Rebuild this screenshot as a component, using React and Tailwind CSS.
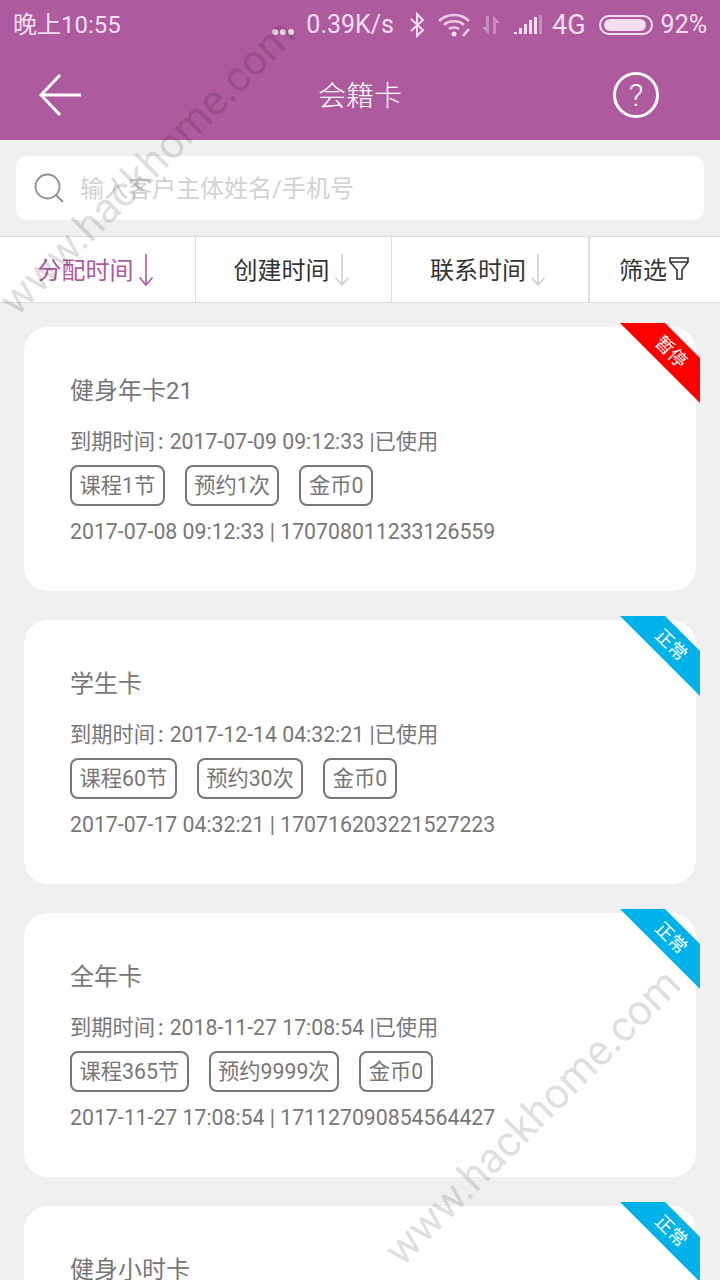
import { Search } from 'lucide-react';

const cards = [
  { name: '健身年卡21', expire: '2017-07-09 09:12:33', tags: ['课程1节', '预约1次', '金币0'], order: '2017-07-08 09:12:33 | 170708011233126559', status: '暂停', paused: true },
  { name: '学生卡', expire: '2017-12-14 04:32:21', tags: ['课程60节', '预约30次', '金币0'], order: '2017-07-17 04:32:21 | 170716203221527223', status: '正常' },
  { name: '全年卡', expire: '2018-11-27 17:08:54', tags: ['课程365节', '预约9999次', '金币0'], order: '2017-11-27 17:08:54 | 171127090854564427', status: '正常' },
  { name: '健身小时卡', status: '正常' },
];

function SortArrow({ active }) {
  return (
    <svg width="16" height="34" viewBox="0 0 16 34" fill="none" stroke={active ? '#ae5a9e' : '#cfcfcf'} strokeWidth="1.6">
      <path d="M8 1V32M1.500 24.500L8 32L14.500 24.500" />
    </svg>
  );
}

function StatusBar() {
  return (
    <div className="flex h-[50px] items-center justify-between pl-[13px] pr-[13px] text-[25px] text-[#f3dff0]">
      <span className="text-[24px]">晚上10:55</span>
      <div className="flex items-center">
        <span className="mr-[12px] mt-[13px] flex gap-[2px]">
          <i className="h-[6px] w-[6px] rounded-full bg-[#f0d8ec]" />
          <i className="h-[6px] w-[6px] rounded-full bg-[#f0d8ec]" />
          <i className="h-[6px] w-[6px] rounded-full bg-[#f0d8ec]" />
        </span>
        <span className="mr-[15px]">0.39K/s</span>
        <svg className="mr-[13px]" width="16" height="26" viewBox="0 0 16 26" fill="none" stroke="#f3dff0" strokeWidth="2">
          <path d="M2 7L14 18L8 24V2L14 8L2 19" />
        </svg>
        <svg className="mr-[10px]" width="33" height="26" viewBox="0 0 33 26" fill="none" stroke="#eccde6" strokeWidth="2.600">
          <path d="M1 9C9 1 23 1 31 9M6 13C11 8 21 8 26 13M11 17C13.500 15 18.500 15 21 17" />
          <circle cx="16" cy="22" r="2.500" fill="#f3dff0" stroke="none" />
          <path d="M25 24L31 17" strokeWidth="2.600" />
        </svg>
        <svg className="mr-[13px]" width="20" height="24" viewBox="0 0 20 24" fill="#c98cbc">
          <path d="M5 3H8V22L1 14H5ZM12 2L19 10H15V21H12Z" />
        </svg>
        <svg className="mr-[9px]" width="29" height="22" viewBox="0 0 29 22">
          <path d="M0 20H3V18H0ZM5 20H8V14H5ZM10 20H13V10H10ZM15 20H18V6H15ZM20 20H23V3H20Z" fill="#f3dff0" />
          <path d="M25 20H28V1H25Z" fill="#c98cbc" />
        </svg>
        <span className="mr-[13px] text-[27px]">4G</span>
        <span className="mr-[8px] flex h-[20px] w-[54px] items-center rounded-full border-2 border-[#f3dff0] px-[3px]">
          <span className="h-[12px] w-[42px] rounded-full bg-[#f3dff0]" />
        </span>
        <span>92%</span>
      </div>
    </div>
  );
}

function Tab({ label, active, width }) {
  return (
    <div className={`flex h-full items-center justify-center gap-[4px] pr-[4px] border-r border-[#dcdcdc] ${width} ${active ? 'text-[#ae5a9e]' : 'text-[#333333]'}`}>
      <span className="mt-[3px]">{label}</span>
      <SortArrow active={active} />
    </div>
  );
}

function MemberCard({ card }) {
  return (
    <div className="relative h-[264px] rounded-[24px] bg-white pl-[46px] pt-[48px] text-[#777777]">
      <svg className="absolute right-[-4px] top-[-4px]" width="80" height="80" viewBox="0 0 80 80">
        <polygon points="0,0 45,0 80,35 80,80" fill={card.paused ? '#ff0000' : '#00b2ea'} />
      </svg>
      <span className="absolute right-[7px] top-[16px] rotate-45 text-[18px] leading-none text-white">{card.status}</span>
      <div className="h-[32px] text-[24px] leading-[32px]">{card.name}</div>
      {card.expire && (
        <>
          <div className="mt-[21px] h-[28px] text-[21.25px] leading-[28px]">
            到期时间<span className="ml-[3px] mr-[6px] font-medium">:</span>{card.expire} |已使用
          </div>
          <div className="mt-[9px] flex gap-[20px]">
            {card.tags.map((tag) => (
              <span key={tag} className="flex h-[41px] items-center rounded-[8px] border-2 border-[#777777] px-[7.5px] pt-[1px] text-[21.25px]">{tag}</span>
            ))}
          </div>
          <div className="mt-[12px] h-[28px] text-[21.25px] leading-[28px]">{card.order}</div>
        </>
      )}
    </div>
  );
}

export default function App() {
  return (
    <div className="relative h-[1280px] w-[720px] overflow-hidden bg-[#f0f0f0] font-['Roboto','Noto_Sans_CJK_SC',sans-serif]">
      <div className="h-[140px] bg-[#ae5a9e]">
        <StatusBar />
        <div className="flex h-[90px] items-center pl-[39px] pr-[61px] text-white">
          <div className="flex-1">
            <svg width="44" height="44" viewBox="0 0 44 44" fill="none" stroke="white" strokeWidth="3">
              <path d="M42 22H3M21 2L2 22L21 42" />
            </svg>
          </div>
          <span className="mt-[4px] mr-[-22px] text-[28px] font-light">会籍卡</span>
          <div className="flex flex-1 justify-end">
            <span className="flex h-[46px] w-[46px] items-center justify-center rounded-full border-[3px] border-white text-[32px] font-light">?</span>
          </div>
        </div>
      </div>

      <div className="px-[16px] py-[16px]">
        <div className="flex h-[64px] items-center rounded-[10px] bg-white pl-[15px] text-[24px] text-[#d2d2d2]">
          <Search className="mr-[13px] text-[#8f8f8f]" size={36} strokeWidth={1.2} />
          <span className="mt-[2px]">输入客户主体姓名/手机号</span>
        </div>
      </div>

      <div className="flex h-[67px] items-center border-y border-[#dcdcdc] bg-white text-[24px]">
        <Tab label="分配时间" active width="w-[196px]" />
        <Tab label="创建时间" width="w-[196px]" />
        <Tab label="联系时间" width="w-[198px] border-r-2" />
        <div className="flex h-full flex-1 items-center justify-center gap-[2px] pr-[2px] text-[#333333]">
          <span className="mt-[3px]">筛选</span>
          <svg className="mb-[3px]" width="20" height="25" viewBox="0 0 20 25" fill="none" stroke="#333333" strokeWidth="1.6">
            <path d="M1 2H19V6L13 14V23H8V14L1 6ZM1 6H19" />
          </svg>
        </div>
      </div>

      <div className="flex flex-col gap-[29px] px-[24px] pt-[24px]">
        {cards.map((card) => (
          <MemberCard key={card.name} card={card} />
        ))}
      </div>

      <span className="pointer-events-none absolute left-[-51px] top-[146px] -rotate-45 text-[42.5px] leading-none whitespace-nowrap text-black/15">www.hackhome.com</span>
      <span className="pointer-events-none absolute left-[334px] top-[1096px] -rotate-45 text-[42.5px] leading-none whitespace-nowrap text-black/15">www.hackhome.com</span>
    </div>
  );
}
